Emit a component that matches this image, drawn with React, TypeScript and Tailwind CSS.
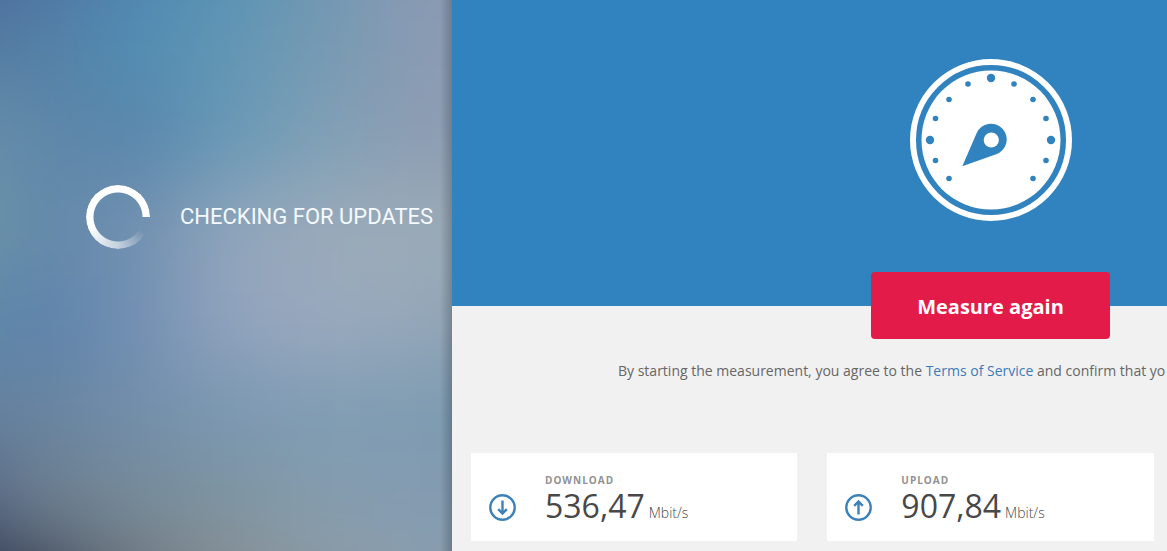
/**
 * Update status panel next to the speed measurement page
 */

import type { ReactNode } from 'react';

// wallpaper colours, row by row; the outer cells bleed past the panel
const WALLPAPER = [
  ['#466598', '#4c719e', '#5084b2', '#5792b4', '#6d97b4', '#8899b2', '#8e9ab2'],
  ['#5078a0', '#557fa6', '#518db2', '#6196b4', '#7599b3', '#889bb3', '#8f9cb4'],
  ['#6a93a8', '#5f87a9', '#5986ac', '#6798b6', '#7ea0b6', '#8c9db3', '#909eb2'],
  ['#7098a8', '#6489a9', '#7190b0', '#90a5bb', '#9baaba', '#9cacb8', '#98a8b3'],
  ['#6089a8', '#5d83ac', '#718fb3', '#91a3be', '#9aa9be', '#96a8ba', '#8ea2b4'],
  ['#66809f', '#68849f', '#738eaa', '#7a97b1', '#7f9db4', '#7e9cb2', '#7a98ad'],
  ['#4c5c7c', '#6d7c8c', '#768a96', '#7f949f', '#869cac', '#869cb2', '#8299ae'],
  ['#1c2438', '#333b4c', '#6e7078', '#8b8b90', '#8d99a0', '#8c9faa', '#889dac'],
];

const BIG_DOTS = [
  [81, 19],
  [20, 81],
  [141, 81],
];

const SMALL_DOTS = [
  [58, 25],
  [104, 25],
  [39, 40.5],
  [123, 40.5],
  [25.5, 59.5],
  [136, 59.5],
  [25.5, 101.5],
  [136, 101.5],
  [39, 119.5],
  [123, 119.5],
];

function Wallpaper() {
  return (
    <div aria-hidden="true" className="absolute inset-0">
      <div className="absolute -inset-24 grid grid-cols-7 blur-[40px]">
        {WALLPAPER.flat().map((color, i) => (
          <div key={i} style={{ backgroundColor: color }} />
        ))}
      </div>
      <div className="absolute inset-y-0 right-0 w-3 bg-linear-to-r from-transparent to-black/20" />
    </div>
  );
}

function Spinner() {
  return (
    <div
      aria-hidden="true"
      className="size-16 shrink-0 rounded-full bg-[conic-gradient(from_90deg,transparent_30deg,rgba(255,255,255,0.6)_90deg,white_160deg)] mask-[radial-gradient(circle,transparent_24px,black_25px)]"
    />
  );
}

function Gauge() {
  return (
    <svg viewBox="0 0 162 162" className="size-[162px]" aria-hidden="true">
      <circle cx="81" cy="81" r="78" fill="none" stroke="#fff" strokeWidth="6" />
      <circle cx="81" cy="81" r="69.5" fill="#fff" />
      <g fill="#3083be">
        {BIG_DOTS.map(([x, y]) => (
          <circle key={`${x}-${y}`} cx={x} cy={y} r="4.2" />
        ))}
        {SMALL_DOTS.map(([x, y]) => (
          <circle key={`${x}-${y}`} cx={x} cy={y} r="2.8" />
        ))}
        <path d="M52.3 107.2 66.6 74.2A15.7 15.7 0 1 1 86.1 95.3Z" />
      </g>
      <circle cx="81.3" cy="81" r="7.6" fill="#fff" />
    </svg>
  );
}

function ArrowCircle({ up }: { up?: boolean }) {
  return (
    <svg
      viewBox="0 0 27 27"
      className="size-[27px] shrink-0"
      fill="none"
      stroke="#3b82bb"
      strokeWidth="2.4"
      aria-hidden="true"
    >
      <circle cx="13.5" cy="13.5" r="12.2" />
      {up ? (
        <path d="M13.5 20.5V8M9.2 11.8l4.3-4.3 4.3 4.3" />
      ) : (
        <path d="M13.5 6.5V19M9.2 15.2l4.3 4.3 4.3-4.3" />
      )}
    </svg>
  );
}

interface ResultCardProps {
  label: string;
  value: string;
  icon: ReactNode;
}

function ResultCard({ label, value, icon }: ResultCardProps) {
  return (
    <section className="flex items-end gap-[29px] bg-white px-[18px] pt-[21px] pb-5">
      {icon}
      <div>
        <h2 className="text-[10px] leading-3 font-bold tracking-[1px] text-[#929292] uppercase">
          {label}
        </h2>
        <p className="mt-1 flex items-baseline gap-1 text-[#484848]">
          <span className="text-[32px] leading-[31px]">{value}</span>
          <span className="text-sm leading-none font-light">Mbit/s</span>
        </p>
      </div>
    </section>
  );
}

export default function App() {
  return (
    <div className="flex min-h-screen overflow-hidden bg-[#f1f1f1] font-['Open_Sans',sans-serif]">
      <aside className="relative w-[452px] shrink-0 overflow-hidden">
        <Wallpaper />
        <div role="status" className="relative flex items-center gap-[30px] pt-[185px] pl-[86px]">
          <Spinner />
          <span className="pb-0.5 font-[Roboto,sans-serif] text-[22px] whitespace-nowrap text-[#f4faff]">
            CHECKING FOR UPDATES
          </span>
        </div>
      </aside>

      <main className="min-w-0 flex-1 overflow-hidden">
        <div className="min-w-[1077px]">
          <header className="flex justify-center bg-[#3083be] pt-[59px] pb-[85px]">
            <Gauge />
          </header>

          <div className="relative -mt-[34px] flex justify-center">
            <button
              type="button"
              className="rounded bg-[#e31b48] px-[46px] pt-5 pb-[18px] text-xl leading-[29px] font-bold text-white"
            >
              Measure again
            </button>
          </div>

          <p className="mt-5 pl-[166px] text-sm leading-6 whitespace-nowrap text-[#666]">
            By starting the measurement, you agree to the{' '}
            <a href="#terms" className="text-[#3b7bb8]">
              Terms of Service
            </a>{' '}
            and confirm that yo
          </p>

          <div className="mt-[70px] grid grid-cols-3 gap-[30px] px-[19px] pb-[10px]">
            <ResultCard label="Download" value="536,47" icon={<ArrowCircle />} />
            <ResultCard label="Upload" value="907,84" icon={<ArrowCircle up />} />
          </div>
        </div>
      </main>
    </div>
  );
}
